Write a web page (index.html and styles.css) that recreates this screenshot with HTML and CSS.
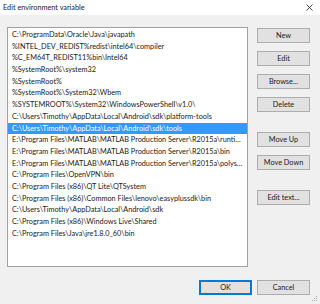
FILE: index.html
```html
<!DOCTYPE html>
<html lang="en">
<head>
    <meta charset="UTF-8">
    <title>Edit environment variable</title>
    <link rel="stylesheet" href="styles.css">
</head>
<body>

<div class="titlebar">
    <span class="title">Edit environment variable</span>
    <svg class="close" width="7" height="7" viewBox="0 0 7 7">
        <path d="M0.5 0.5 L6.5 6.5 M6.5 0.5 L0.5 6.5" stroke="#333" stroke-width="0.9" fill="none"/>
    </svg>
</div>

<div class="main">
    <ul class="pathlist">
        <li>C:\ProgramData\Oracle\Java\javapath</li>
        <li>%INTEL_DEV_REDIST%redist\intel64\compiler</li>
        <li>%C_EM64T_REDIST11%bin\Intel64</li>
        <li>%SystemRoot%\system32</li>
        <li>%SystemRoot%</li>
        <li>%SystemRoot%\System32\Wbem</li>
        <li>%SYSTEMROOT%\System32\WindowsPowerShell\v1.0\</li>
        <li>C:\Users\Timothy\AppData\Local\Android\sdk\platform-tools</li>
        <li class="selected">C:\Users\Timothy\AppData\Local\Android\sdk\tools</li>
        <li>E:\Program Files\MATLAB\MATLAB Production Server\R2015a\runtime\win64</li>
        <li>E:\Program Files\MATLAB\MATLAB Production Server\R2015a\bin</li>
        <li>E:\Program Files\MATLAB\MATLAB Production Server\R2015a\polyspace\bin</li>
        <li>C:\Program Files\OpenVPN\bin</li>
        <li>C:\Program Files (x86)\QT Lite\QTSystem</li>
        <li>C:\Program Files (x86)\Common Files\lenovo\easyplussdk\bin</li>
        <li>C:\Users\Timothy\AppData\Local\Android\sdk</li>
        <li>C:\Program Files (x86)\Windows Live\Shared</li>
        <li>C:\Program Files\Java\jre1.8.0_60\bin</li>
    </ul>

    <div class="side">
        <div class="group">
            <button>New</button>
            <button>Edit</button>
            <button>Browse...</button>
            <button>Delete</button>
        </div>
        <div class="group">
            <button>Move Up</button>
            <button>Move Down</button>
        </div>
        <div class="group">
            <button>Edit text...</button>
        </div>
    </div>
</div>

<div class="footer">
    <button class="default">OK</button>
    <button>Cancel</button>
</div>

<svg class="grip" width="6" height="6" viewBox="0 0 6 6">
    <rect x="4" y="0" width="1" height="1" fill="#aaa"/>
    <rect x="2" y="2" width="1" height="1" fill="#aaa"/>
    <rect x="4" y="2" width="1" height="1" fill="#aaa"/>
    <rect x="0" y="4" width="1" height="1" fill="#aaa"/>
    <rect x="2" y="4" width="1" height="1" fill="#aaa"/>
    <rect x="4" y="4" width="1" height="1" fill="#aaa"/>
</svg>

</body>
</html>
```

FILE: styles.css
```css
body {
    margin: 0;
    width: 320px;
    height: 304px;
    background-color: #f0f0f0;
    font-family: Lato, "Noto Sans", sans-serif;
    font-size: 7.3px;
    color: #1a1a1a;
    position: relative;
    overflow: hidden;
}
.titlebar {
    height: 15px;
    background-color: #fff;
    display: flex;
    align-items: center;
    justify-content: space-between;
    padding: 0 7px 0 3px;
}
.title {
    color: #222;
}
.main {
    display: flex;
    gap: 9px;
    padding: 12px 0 0 7px;
}
.pathlist {
    list-style: none;
    margin: 0;
    padding: 1px 0 0 0;
    width: 239px;
    height: 237px;
    background-color: #fff;
    border: 1px solid #a0a0a0;
    overflow: hidden;
}
.pathlist li {
    height: 11.7px;
    line-height: 11.7px;
    padding: 0 3px 0 4px;
    white-space: nowrap;
    overflow: hidden;
    text-overflow: ellipsis;
}
.pathlist li.selected {
    background-color: #3399ff;
    color: #fff;
}
.side {
    display: flex;
    flex-direction: column;
    gap: 20px;
    padding-top: 1px;
}
.group {
    display: flex;
    flex-direction: column;
    gap: 8px;
}
button {
    width: 53px;
    height: 15px;
    padding: 0;
    background-color: #e1e1e1;
    border: 1px solid #adadad;
    border-radius: 0;
    font-family: Lato, "Noto Sans", sans-serif;
    font-size: 7.3px;
    line-height: 13px;
    white-space: nowrap;
    color: #1a1a1a;
}
.footer {
    display: flex;
    justify-content: flex-end;
    gap: 5px;
    padding: 13px 10px 0 0;
}
button.default {
    border: 1px solid #0078d7;
    box-shadow: inset 0 0 0 1px #0078d7;
}
.grip {
    position: absolute;
    right: 2px;
    bottom: 2px;
}
```
